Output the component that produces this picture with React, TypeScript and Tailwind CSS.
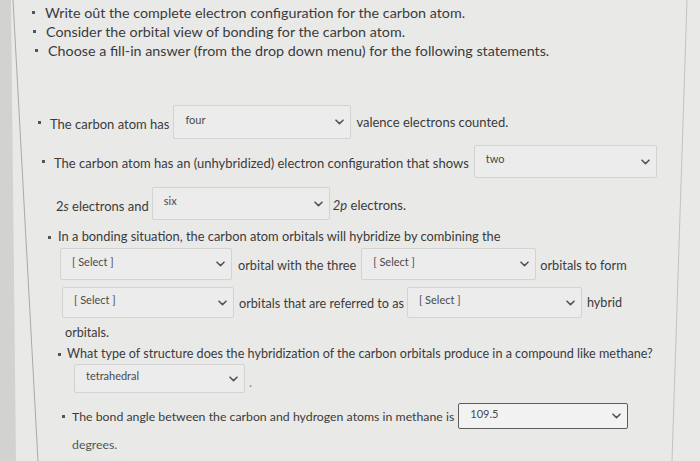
import React from 'react';

const Chevron: React.FC = () => (
  <svg width="9" height="6" viewBox="0 0 9 6" className="shrink-0">
    <path d="M1 1.2 L4.5 4.6 L8 1.2" fill="none" stroke="#555" strokeWidth="1.6" strokeLinecap="round" strokeLinejoin="round" />
  </svg>
);

const Select: React.FC<{ value: string; className: string; dark?: boolean }> = ({ value, className, dark }) => (
  <div
    className={`flex items-center justify-between shrink-0 rounded-[2px] pl-[11px] pr-[6px] ${
      dark ? 'border-[1.5px] border-[#5c5c5c] bg-[#f2f2f2]' : 'border border-[#d3d3d3] bg-[#ececec]'
    } ${className}`}
  >
    <span className="text-[11px] text-[#4a4a4a] -mt-[4px]">{value}</span>
    <Chevron />
  </div>
);

const Dot: React.FC = () => <span className="inline-block w-[3px] h-[3px] bg-[#555] shrink-0" />;

const App: React.FC = () => {
  return (
    <div
      className="relative w-[700px] h-[461px] overflow-hidden bg-[#e9e9e8] text-[#3b3b3b] text-[13px] whitespace-nowrap"
      style={{ fontFamily: 'Lato, "Open Sans", sans-serif' }}
    >
      <svg className="absolute inset-0 pointer-events-none" width="700" height="461">
        <polygon points="0,0 11,0 16,461 0,461" fill="#d2d2d1" />
        <line x1="13" y1="0" x2="38" y2="461" stroke="#a9a9a9" strokeWidth="1" />
        <line x1="687" y1="0" x2="672" y2="461" stroke="#c2c2c2" strokeWidth="1" />
      </svg>

      <div className="relative flex flex-col">
        <div className="flex flex-col pt-[3px] leading-[19px] text-[14.3px]">
          <div className="flex items-center gap-[10px] pl-[32px]">
            <Dot />
            <span>Write oût the complete electron configuration for the carbon atom.</span>
          </div>
          <div className="flex items-center gap-[10px] pl-[33px]">
            <Dot />
            <span>Consider the orbital view of bonding for the carbon atom.</span>
          </div>
          <div className="flex items-center gap-[10px] pl-[35px]">
            <Dot />
            <span>Choose a fill-in answer (from the drop down menu) for the following statements.</span>
          </div>
        </div>

        <div className="flex items-center mt-[45px] pl-[38px] h-[34px]">
          <Dot />
          <span className="ml-[9px] mr-[4px] mt-[6px]">The carbon atom has</span>
          <Select value="four" className="w-[178px] h-[34px]" />
          <span className="ml-[5px] mt-[2px]">valence electrons counted.</span>
        </div>

        <div className="flex items-center mt-[6px] pl-[42px] h-[33px]">
          <Dot />
          <span className="ml-[9px] mr-[5px] mt-[5px]">The carbon atom has an (unhybridized) electron configuration that shows</span>
          <Select value="two" className="w-[183px] h-[33px]" />
        </div>

        <div className="flex items-center mt-[9px] pl-[56px] h-[33px]">
          <span className="mr-[3px] mt-[6px]">2<i>s</i> electrons and</span>
          <Select value="six" className="w-[178px] h-[33px]" />
          <span className="ml-[3px] mt-[5px]"><i>2p</i> electrons.</span>
        </div>

        <div className="flex items-center mt-[6px] pl-[48px] h-[22px] text-[12.85px]">
          <Dot />
          <span className="ml-[7px]">In a bonding situation, the carbon atom orbitals will hybridize by combining the</span>
        </div>

        <div className="flex items-center mt-[0px] pl-[60px] h-[32px] text-[12.75px]">
          <Select value="[ Select ]" className="w-[172px] h-[32px]" />
          <span className="ml-[6px] mr-[5px] mt-[4px]">orbital with the three</span>
          <Select value="[ Select ]" className="w-[175px] h-[32px]" />
          <span className="ml-[4px] mt-[3px]">orbitals to form</span>
        </div>

        <div className="flex items-center mt-[7px] pl-[62px] h-[31px] text-[12.65px]">
          <Select value="[ Select ]" className="w-[172px] h-[31px]" />
          <span className="ml-[5px] mr-[3px] mt-[4px]">orbitals that are referred to as</span>
          <Select value="[ Select ]" className="w-[175px] h-[31px]" />
          <span className="ml-[5px] mt-[2px]">hybrid</span>
        </div>

        <div className="flex items-center pl-[65px] h-[22px] mt-[4px] text-[12.6px]">
          <span>orbitals.</span>
        </div>

        <div className="flex items-center pl-[58px] h-[20px] text-[12.6px]">
          <Dot />
          <span className="ml-[6px]">What type of structure does the hybridization of the carbon orbitals produce in a compound like methane?</span>
        </div>

        <div className="flex items-center pl-[74px] mt-[0px] h-[29px]">
          <Select value="tetrahedral" className="w-[171px] h-[29px]" />
          <span className="ml-[4px] mt-[8px] text-[#888]">.</span>
        </div>

        <div className="flex items-center pl-[62px] mt-[10px] h-[26px] text-[12.3px]">
          <Dot />
          <span className="ml-[7px] mr-[4px] mt-[2px]">The bond angle between the carbon and hydrogen atoms in methane is</span>
          <Select value="109.5" dark className="w-[170px] h-[26px]" />
        </div>

        <div className="flex items-center pl-[72px] mt-[6px] h-[20px] text-[12.3px]">
          <span className="text-[#555]">degrees.</span>
        </div>
      </div>
    </div>
  );
};

export default App;
